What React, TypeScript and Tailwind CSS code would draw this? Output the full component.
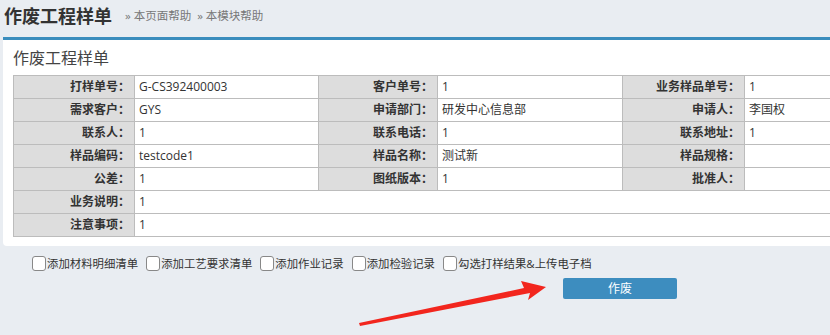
const rows: [string, string, string, string, string, string][] = [
  ["打样单号：", "G-CS392400003", "客户单号：", "1", "业务样品单号：", "1"],
  ["需求客户：", "GYS", "申请部门：", "研发中心信息部", "申请人：", "李国权"],
  ["联系人：", "1", "联系电话：", "1", "联系地址：", "1"],
  ["样品编码：", "testcode1", "样品名称：", "测试新", "样品规格：", ""],
  ["公差：", "1", "图纸版本：", "1", "批准人：", ""],
];

const wide: [string, string][] = [
  ["业务说明：", "1"],
  ["注意事项：", "1"],
];

const checks = ["添加材料明细清单", "添加工艺要求清单", "添加作业记录", "添加检验记录", "勾选打样结果&上传电子档"];

function Label({ text }: { text: string }) {
  return (
    <td className="h-[23px] border border-[#bcbcbc] bg-[#dddddd] pr-[4px] text-right font-bold text-[#333]">
      {text}
    </td>
  );
}

function Value({ text, span }: { text: string; span?: number }) {
  return (
    <td colSpan={span} className="h-[23px] border border-[#bcbcbc] bg-white pl-[4px] text-left text-[#333]">
      {text}
    </td>
  );
}

export default function App() {
  return (
    <div
      className="relative h-[335px] w-[830px] overflow-hidden bg-[#e9edf2] text-[12px]"
      style={{ fontFamily: '"Open Sans", "Noto Sans CJK SC", sans-serif' }}
    >
      <div className="flex h-[37px] items-start pl-[4px] pt-[1px]">
        <h1 className="text-[18px] font-bold leading-[30px] text-[#333]">作废工程样单</h1>
        <div className="ml-[13px] flex gap-[6px] pt-[7px] text-[11.5px] leading-[16px] text-[#777]">
          <span>» 本页面帮助</span>
          <span>» 本模块帮助</span>
        </div>
      </div>

      <div className="ml-[3px] w-[840px] rounded-b-[4px] border-t-[3px] border-[#3a8dbd] bg-white pb-[9px] pl-[10px]">
        <div className="pb-[6px] pt-[8px] text-[16px] leading-[21px] text-[#444]">作废工程样单</div>
        <table className="w-[830px] table-fixed border-collapse leading-[16px]">
          <colgroup>
            <col className="w-[121px]" />
            <col className="w-[184px]" />
            <col className="w-[119px]" />
            <col className="w-[185px]" />
            <col className="w-[122px]" />
            <col />
          </colgroup>
          <tbody>
            {rows.map((r, i) => (
              <tr key={i}>
                <Label text={r[0]} />
                <Value text={r[1]} />
                <Label text={r[2]} />
                <Value text={r[3]} />
                <Label text={r[4]} />
                <Value text={r[5]} />
              </tr>
            ))}
            {wide.map((r, i) => (
              <tr key={"w" + i}>
                <Label text={r[0]} />
                <Value text={r[1]} span={5} />
              </tr>
            ))}
          </tbody>
        </table>
      </div>

      <div className="ml-[32px] mt-[9px] flex items-center gap-[8px] text-[11.4px] text-[#333]">
        {checks.map((c) => (
          <label key={c} className="flex items-center">
            <span className="mr-[1px] inline-block h-[15px] w-[14px] rounded-[3px] border border-[#888] bg-white" />
            {c}
          </label>
        ))}
      </div>

      <div className="ml-[563px] mt-[6px]">
        <button className="h-[21px] w-[114px] rounded-[2px] bg-[#3d8dbf] text-[12px] text-white">作废</button>
      </div>

      <svg className="absolute left-0 top-0" width="830" height="335">
        <polygon points="360,326 530,293 528,300 546,287 521,281 524,288 359,323" fill="#f2261e" />
      </svg>
    </div>
  );
}
